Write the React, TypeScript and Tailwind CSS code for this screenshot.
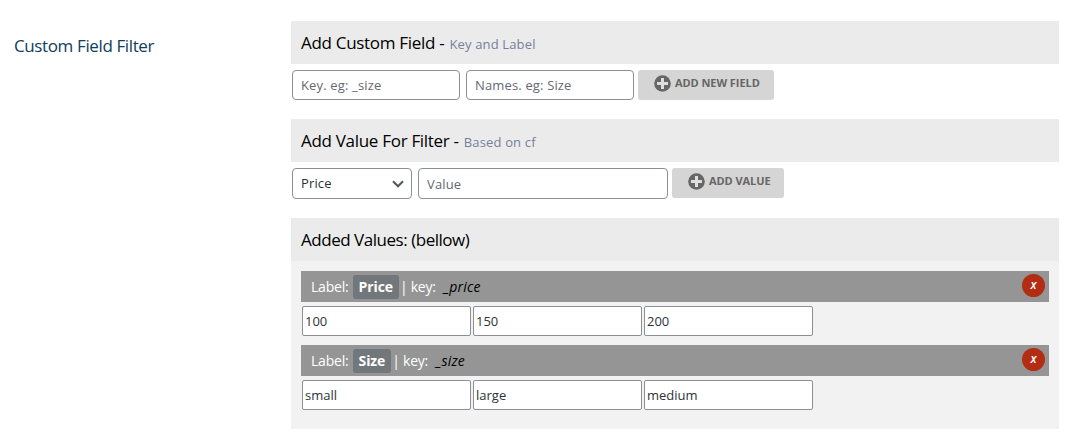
import type { ReactNode } from "react";

function PanelTitle({ children }: { children: ReactNode }) {
  return (
    <h2 className="flex h-[43px] items-baseline bg-[#ebebeb] pl-2.5 text-[17px] leading-[44px] tracking-[-0.3px] text-black">
      {children}
    </h2>
  );
}

function PlusCircle() {
  return (
    <svg viewBox="0 0 17 17" className="size-[17px] shrink-0" aria-hidden="true">
      <circle cx="8.5" cy="8.5" r="8.3" fill="#666666" />
      <path d="M7 3h3v4h4v3h-4v4H7v-4H3V7h4z" fill="#dedede" />
    </svg>
  );
}

const field =
  "rounded-[4px] border border-[#8c8f94] bg-white px-2 text-[13px] tracking-[0.15px] text-[#2c3338] outline-none placeholder:text-[#646970] placeholder:opacity-100";
const button =
  "flex h-[30px] items-center rounded-[3px] bg-[#d5d5d5] pb-1 pl-4 text-[11px] font-bold tracking-[-0.06px] text-[#666666]";

function ValueGroup({ label, slug, values }: { label: string; slug: string; values: string[] }) {
  return (
    <section>
      <header className="flex h-[31px] items-center bg-[#959595] pr-1 pl-2.5 text-[14px] text-white">
        <span className="font-medium tracking-[-0.2px]">Label:</span>
        <span className="ml-1 flex h-6 items-center rounded-[3px] bg-[#72777c] px-1.5 font-bold tracking-[-0.1px]">
          {label}
        </span>
        <span className="ml-px font-medium tracking-[-0.25px]">| key:</span>
        <i className="ml-2 tracking-[0.15px] text-black">{slug}</i>
        <button className="mb-0.5 ml-auto flex size-[23px] items-center justify-center rounded-full bg-[#b32d14] pb-0.5 text-[12px] font-semibold italic">
          x
        </button>
      </header>
      <div className="mt-1 ml-px flex gap-0.5">
        {values.map((value) => (
          <input
            key={value}
            defaultValue={value}
            className="h-[30px] w-[169px] rounded-[2px] border border-[#8c8f94] bg-white px-0.5 text-[13px] text-[#2c3338] outline-none"
          />
        ))}
      </div>
    </section>
  );
}

export default function App() {
  return (
    <main className="flex h-[441px] w-[1073px] bg-white pt-[21px] font-['Open_Sans','Noto_Sans',sans-serif]">
      <h1 className="w-[291px] shrink-0 pl-[14px] text-[17px] leading-[50px] tracking-[-0.38px] text-[#0f3d5c]">
        Custom Field Filter
      </h1>
      <div className="w-[768px]">
        <section>
          <PanelTitle>
            <span>Add Custom Field -</span>
            <small className="ml-[5px] text-[13px] tracking-[0.15px] text-[#777f9b]">Key and Label</small>
          </PanelTitle>
          <div className="mt-1.5 ml-px flex">
            <input placeholder="Key. eg: _size" className={`${field} h-[30px] w-[168px]`} />
            <input placeholder="Names. eg: Size" className={`${field} ml-1.5 h-[30px] w-[168px]`} />
            <button className={`${button} ml-1 w-[136px]`}>
              <PlusCircle />
              <span className="ml-1">ADD NEW FIELD</span>
            </button>
          </div>
        </section>

        <section className="mt-[19px]">
          <PanelTitle>
            <span>Add Value For Filter -</span>
            <small className="ml-[5px] text-[13px] tracking-[0.15px] text-[#777f9b]">Based on cf</small>
          </PanelTitle>
          <div className="mt-1.5 ml-px flex">
            <div className="grid w-[120px] items-center">
              <select className={`${field} col-start-1 row-start-1 h-[31px] w-full appearance-none`}>
                <option>Price</option>
                <option>Size</option>
              </select>
              <svg
                viewBox="0 0 12 8"
                className="pointer-events-none col-start-1 row-start-1 mr-2 h-2 w-3 justify-self-end"
                fill="none"
                stroke="#50575e"
                strokeWidth="2"
                aria-hidden="true"
              >
                <path d="M1 1.3l5 5 5-5" />
              </svg>
            </div>
            <input placeholder="Value" className={`${field} ml-1.5 h-[31px] w-[250px]`} />
            <button className={`${button} ml-1 w-[112px]`}>
              <PlusCircle />
              <span className="ml-1">ADD VALUE</span>
            </button>
          </div>
        </section>

        <section className="mt-[19px] h-[211px] bg-[#f2f2f2]">
          <PanelTitle>
            <span className="tracking-[-0.47px]">Added Values: (bellow)</span>
          </PanelTitle>
          <div className="flex flex-col gap-[9px] px-2.5 pt-2.5">
            <ValueGroup label="Price" slug="_price" values={["100", "150", "200"]} />
            <ValueGroup label="Size" slug="_size" values={["small", "large", "medium"]} />
          </div>
        </section>
      </div>
    </main>
  );
}
